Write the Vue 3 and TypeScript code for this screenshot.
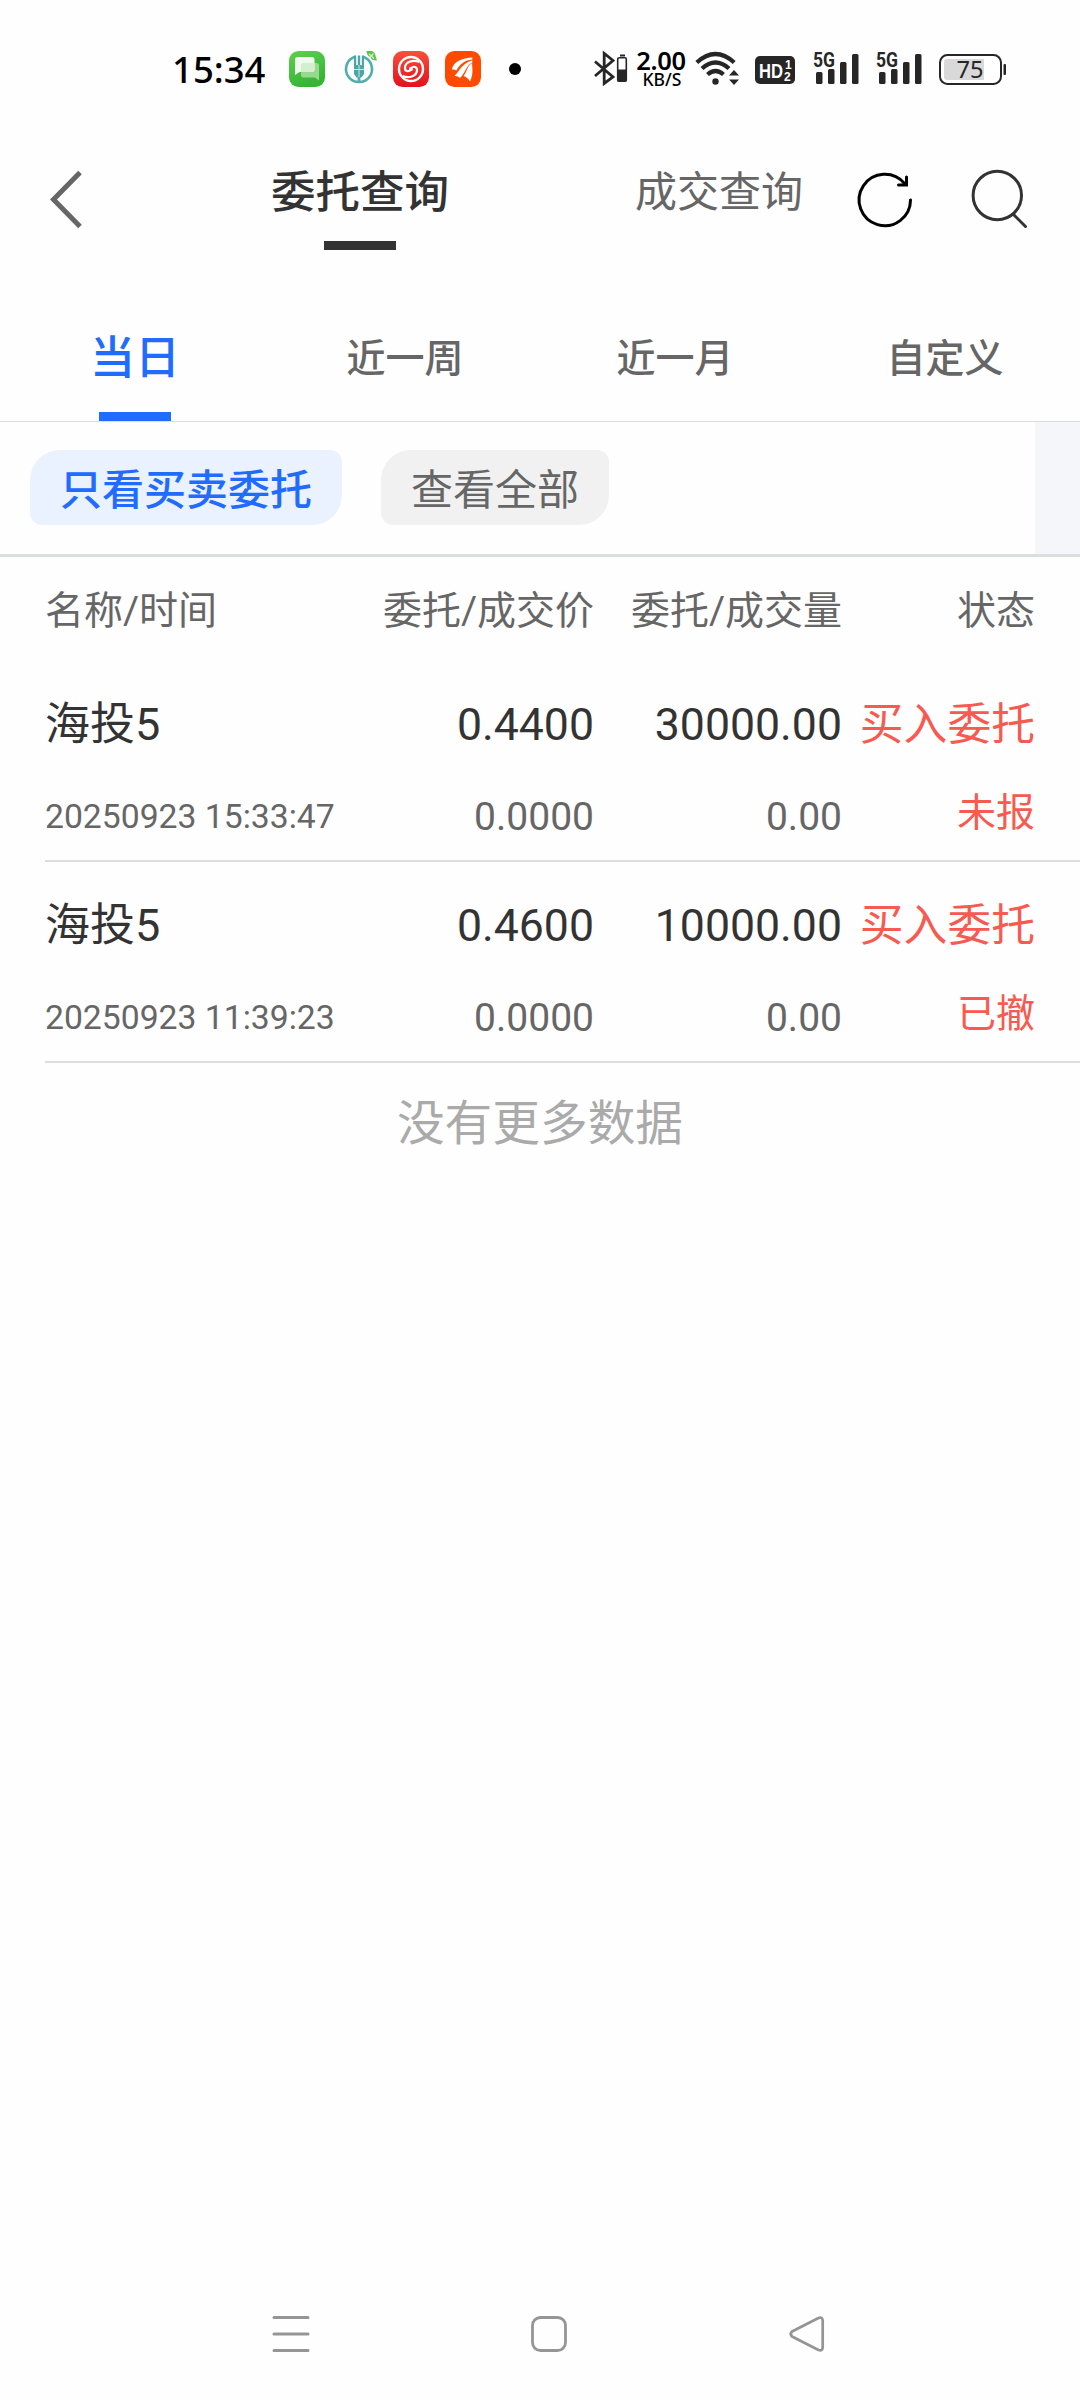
<script setup lang="ts">
interface Order {
  name: string
  time: string
  price: string
  dealPrice: string
  amount: string
  dealAmount: string
  side: string
  status: string
}

const ranges: string[] = ['当日', '近一周', '近一月', '自定义']
const activeRange = 0

const orders: Order[] = [
  {
    name: '海投5',
    time: '20250923 15:33:47',
    price: '0.4400',
    dealPrice: '0.0000',
    amount: '30000.00',
    dealAmount: '0.00',
    side: '买入委托',
    status: '未报',
  },
  {
    name: '海投5',
    time: '20250923 11:39:23',
    price: '0.4600',
    dealPrice: '0.0000',
    amount: '10000.00',
    dealAmount: '0.00',
    side: '买入委托',
    status: '已撤',
  },
]
</script>

<template>
  <div class="screen">
    <div class="status-bar">
      <div class="status-left">
        <span class="clock">15:34</span>
        <svg class="app-icon" viewBox="0 0 36 36">
          <defs>
            <linearGradient id="msg" x1="0" y1="0" x2="0.4" y2="1">
              <stop offset="0" stop-color="#5fd04f" />
              <stop offset="1" stop-color="#35b534" />
            </linearGradient>
          </defs>
          <rect width="36" height="36" rx="9.5" fill="url(#msg)" />
          <path d="M14 12h13.500a2.500 2.500 0 0 1 2.500 2.500V29.500l-4-3H14.500a2.500 2.500 0 0 1-2.500-2.500V14a2 2 0 0 1 2-2z" fill="#98d992" />
          <path d="M8.500 6h14.500a2.500 2.500 0 0 1 2.500 2.500v10a2.500 2.500 0 0 1-2.500 2.500H10.500l-4.500 3V8.500a2.500 2.500 0 0 1 2.500-2.500z" fill="#eefaec" />
          <path d="M12 21V14.500a2.500 2.500 0 0 1 2.500-2.500H25.500v6.500a2.500 2.500 0 0 1-2.500 2.500z" fill="#d3efcf" />
        </svg>
        <svg class="app-icon" viewBox="0 0 36 36">
          <g fill="none" stroke="#4fb0ab">
            <path d="M14 5.700A13 13 0 1 0 22 5.700" stroke-width="2.600" />
            <path d="M18 24v8" stroke-width="2.800" />
          </g>
          <path d="M13 4.500h2.200V14h1.600V4.500h2.400V14h1.600V4.500H23V23l-2.500 3.500h-5L13 23z" fill="#4fa5a6" />
          <path d="M18 14v12M13 18.500h10" stroke="#d7efee" stroke-width="0.900" />
          <path d="M25.500 0h5.500q3.500 1.500 3.500 5l1.500 4.500q-5.500 0-7-3.500-3.500-2-3.500-6z" fill="#5fc24a" />
          <path d="M28 3l5 4.500M32.500 2.500L29 6.500" stroke="#d8f2d0" stroke-width="1.200" />
        </svg>
        <svg class="app-icon" viewBox="0 0 36 36">
          <defs>
            <linearGradient id="swirl" x1="0" y1="0" x2="0" y2="1">
              <stop offset="0" stop-color="#f8503c" />
              <stop offset="1" stop-color="#e4101b" />
            </linearGradient>
          </defs>
          <rect width="36" height="36" rx="9.500" fill="url(#swirl)" />
          <g fill="none" stroke="#fff">
            <circle cx="18" cy="18" r="12" stroke-width="2.400" />
            <path d="M26.500 11C20 8.500 13 10.500 12 16C11.500 20.500 15.500 21.500 18 18.500" stroke-width="2.200" />
            <path d="M9.500 25C16 27.500 23 25.500 24 20C24.500 15.500 20.500 14.500 18 17.500" stroke-width="2.200" />
          </g>
          <rect x="16.300" y="16.300" width="3.400" height="3.400" fill="#fff" />
        </svg>
        <svg class="app-icon" viewBox="0 0 36 36">
          <rect width="36" height="36" rx="9.500" fill="#ff4a00" />
          <g fill="#fff">
            <path d="M6.800 18.500C8.500 10.500 17 7 27.500 6.500L27.300 8.500C19 9.500 14.500 13.500 11.500 19.500Q9.300 18 6.800 18.500z" />
            <path d="M9.500 25C14.500 20.500 16.500 12.500 27.300 9.300L27.300 11.500C21 14.500 20 22.500 15 27Q12.500 24.500 9.500 25z" />
            <path d="M18.500 25C22 21.500 21 16 27.200 12C26.800 17 29 22 25 30.500Q22.500 26 18.500 25z" />
          </g>
        </svg>
        <i class="more-dot"></i>
      </div>

      <div class="status-right">
        <svg width="36" height="36" viewBox="0 0 36 36">
          <path d="M2 10.500L20 26L11.200 32.500V2.500L20 9.500L2 25" fill="none" stroke="#262626" stroke-width="2.800" />
          <rect x="27" y="3.500" width="5" height="2" fill="#262626" />
          <rect x="24.700" y="6.700" width="8.600" height="23.500" rx="1.500" fill="#fff" stroke="#262626" stroke-width="1.600" />
          <rect x="24.500" y="18.500" width="9" height="12" fill="#262626" />
        </svg>
        <div class="speed">
          <span class="speed-value">2.00</span>
          <span class="speed-unit">KB/S</span>
        </div>
        <svg class="wifi" width="46" height="36" viewBox="0 0 46 36">
          <g fill="none" stroke="#262626" stroke-width="4.300">
            <path d="M1.800 11.500Q20.500-5.500 39.200 11.500" />
            <path d="M7 17.500Q20.500 5.500 34 17.500" />
            <path d="M12.500 23.500Q20.500 16.500 28.500 23.500" />
          </g>
          <circle cx="20.500" cy="30.500" r="3.200" fill="#262626" />
          <path d="M34 24.500l5-5.500 5 5.500zM34 28.500l5 5.500 5-5.500z" fill="#262626" />
        </svg>
        <svg class="hd" width="40" height="28" viewBox="0 0 40 28">
          <rect width="40" height="28" rx="5" fill="#262626" />
          <text x="4" y="21.500" class="hd-text" textLength="24" lengthAdjust="spacingAndGlyphs">HD</text>
          <text x="30" y="12.500" class="hd-num">1</text>
          <text x="29" y="24.500" class="hd-num">2</text>
        </svg>
        <svg v-for="n in 2" :key="n" class="signal" width="46" height="34" viewBox="0 0 46 34">
          <g fill="#262626">
            <rect x="3" y="20" width="6.500" height="12" rx="1.500" />
            <rect x="15" y="17" width="6.500" height="15" rx="1.500" />
            <rect x="27" y="10" width="6.500" height="22" rx="1.500" />
            <rect x="39" y="2" width="6.500" height="30" rx="1.500" />
          </g>
          <text x="0" y="14.500" class="net" textLength="22" lengthAdjust="spacingAndGlyphs">5G</text>
        </svg>
        <svg class="battery" width="68" height="32" viewBox="0 0 68 32">
          <rect x="1" y="1" width="61" height="29" rx="7.500" fill="#fff" stroke="#262626" stroke-width="2" />
          <path d="M8 5H45V26H8Q5 26 5 23V8Q5 5 8 5z" fill="#d9d9d9" />
          <rect x="64.500" y="10" width="2.500" height="11" rx="1" fill="#262626" />
          <text x="17.500" y="24" class="level" textLength="27" lengthAdjust="spacingAndGlyphs">75</text>
        </svg>
      </div>
    </div>

    <header class="nav">
      <svg class="back" width="40" height="60" viewBox="0 0 40 60">
        <path d="M33 2.500L6.500 29.500L33 56.500" fill="none" stroke="#666" stroke-width="5" />
      </svg>
      <div class="nav-tab active">
        <span>委托查询</span>
        <i></i>
      </div>
      <div class="nav-tab second"><span>成交查询</span></div>
      <svg class="refresh" width="56" height="56" viewBox="0 0 56 56">
        <g fill="none" stroke="#000" stroke-width="3" stroke-linecap="round">
          <path d="M53.500 28A25.700 25.700 0 1 1 47.500 11.500" />
          <path d="M49.500 5V13H41.500" />
        </g>
      </svg>
      <svg class="search" width="58" height="60" viewBox="0 0 58 60">
        <g fill="none" stroke="#333" stroke-width="3" stroke-linecap="round">
          <circle cx="26.300" cy="26.500" r="24.200" />
          <path d="M42.500 45.500L54.500 57.500" />
        </g>
      </svg>
    </header>

    <nav class="ranges">
      <div v-for="(r, i) in ranges" :key="r" class="range" :class="{ active: i === activeRange }">
        <span>{{ r }}</span>
        <i v-if="i === activeRange"></i>
      </div>
    </nav>

    <div class="filters">
      <div class="chips">
        <button class="chip active">只看买卖委托</button>
        <button class="chip">查看全部</button>
      </div>
      <div class="filter-edge"></div>
    </div>

    <main>
      <div class="grid head">
        <span>名称/时间</span>
        <span>委托/成交价</span>
        <span>委托/成交量</span>
        <span>状态</span>
      </div>
      <div v-for="o in orders" :key="o.time" class="order">
        <div class="grid primary">
          <span class="name">{{ o.name }}</span>
          <span>{{ o.price }}</span>
          <span>{{ o.amount }}</span>
          <span class="side">{{ o.side }}</span>
        </div>
        <div class="grid secondary">
          <span class="time">{{ o.time }}</span>
          <span>{{ o.dealPrice }}</span>
          <span>{{ o.dealAmount }}</span>
          <span class="state">{{ o.status }}</span>
        </div>
      </div>
      <p class="end">没有更多数据</p>
    </main>

    <footer class="system-nav">
      <svg width="36" height="36" viewBox="0 0 36 36">
        <path d="M1 1.500H35M1 18H35M1 34.500H35" stroke="#959595" stroke-width="3" stroke-linecap="round" />
      </svg>
      <svg width="36" height="36" viewBox="0 0 36 36">
        <rect x="1.500" y="1.500" width="33" height="33" rx="8" fill="none" stroke="#959595" stroke-width="2.800" />
      </svg>
      <svg width="36" height="36" viewBox="0 0 36 36">
        <path d="M29.500 2L3 15.500Q0.500 18 3 20.500L29.500 34Q33.500 35.500 33.700 31.500V4.500Q33.500 0.500 29.500 2z" fill="none" stroke="#959595" stroke-width="2.700" stroke-linejoin="round" />
      </svg>
    </footer>
  </div>
</template>

<style>
body {
  background: #fefefe;
}
</style>

<style scoped>
.screen {
  display: flex;
  flex-direction: column;
  width: 1080px;
  height: 2400px;
  overflow: hidden;
  background: #fefefe;
  color: #333;
  font-family: Roboto, "Noto Sans CJK SC", sans-serif;
}

svg {
  display: block;
  flex: none;
  overflow: visible;
}

i {
  display: block;
}

.status-bar {
  display: flex;
  justify-content: space-between;
  height: 122px;
  padding: 8px 73px 0 172px;
}

.status-left,
.status-right {
  display: flex;
  align-items: center;
  height: 122px;
}

.clock {
  width: 117px;
  font: 500 36.5px/50px "Noto Sans", sans-serif;
  color: #000;
}

.app-icon {
  width: 36px;
  height: 36px;
  margin-right: 16px;
}

.more-dot {
  width: 12px;
  height: 12px;
  margin-left: 12px;
  border-radius: 50%;
  background: #000;
}

.speed {
  display: flex;
  flex-direction: column;
  align-items: center;
  width: 54px;
  margin-left: 5px;
  color: #000;
  font-family: "Noto Sans", sans-serif;
}

.speed-value {
  font-size: 25.5px;
  font-weight: 600;
  line-height: 20px;
  letter-spacing: -0.3px;
}

.speed-unit {
  margin-left: 2px;
  font-size: 17.5px;
  font-weight: 500;
  line-height: 18px;
}

.wifi {
  margin-left: 7px;
}

.hd {
  margin: 2px 18px 0 14px;
}

.hd-text {
  font: 700 21px "Liberation Sans", sans-serif;
  fill: #fff;
}

.hd-num {
  font: 700 12px "Liberation Sans", sans-serif;
  fill: #fff;
}

.signal {
  margin-right: 17px;
}

.net {
  font: 700 20px Roboto, sans-serif;
  fill: #262626;
  stroke: #fefefe;
  stroke-width: 3px;
  paint-order: stroke;
}

.battery {
  margin-top: 1px;
}

.level {
  font: 400 23px "Noto Sans", sans-serif;
  fill: #262626;
}

.nav {
  display: flex;
  align-items: flex-start;
  height: 140px;
}

.back {
  margin: 40px 0 0 47px;
}

.nav-tab {
  display: flex;
  flex-direction: column;
  align-items: center;
  padding-top: 33px;
  font-size: 42px;
  line-height: 60px;
  color: #666;
}

.nav-tab.active {
  width: 180px;
  margin-left: 183px;
  font-size: 44.5px;
  font-weight: 500;
  color: #333;
}

.nav-tab i {
  width: 72px;
  height: 9px;
  margin-top: 18px;
  background: #333;
}

.nav-tab.second {
  width: 180px;
  margin-left: 179px;
}

.refresh {
  margin: 42px 0 0 48px;
}

.search {
  margin: 39px 0 0 58px;
}

.ranges {
  display: flex;
  height: 151px;
  border-bottom: 1px solid #dcdddd;
}

.range {
  display: flex;
  flex: 1;
  flex-direction: column;
  align-items: center;
  padding-top: 59px;
  font-size: 39px;
  font-weight: 500;
  line-height: 60px;
  color: #666;
}

.range.active {
  font-size: 45px;
  color: #216bff;
}

.range i {
  width: 72px;
  height: 9px;
  margin-top: 23px;
  background: #216bff;
}

.filters {
  display: flex;
  justify-content: space-between;
  height: 132px;
  border-bottom: 3px solid #dcdddd;
}

.chips {
  display: flex;
  gap: 39px;
  padding: 28px 0 0 30px;
}

.chip {
  height: 75px;
  padding: 7px 30px 0;
  border: 0;
  border-radius: 30px 12px 30px 12px;
  background: #f1f1f1;
  color: #666;
  font: 400 42px/68px Roboto, "Noto Sans CJK SC", sans-serif;
}

.chip.active {
  background: #ebf2ff;
  color: #216bff;
  font-weight: 500;
}

.filter-edge {
  width: 45px;
  background: #f4f6f9;
}

main {
  flex: 1;
}

.grid {
  display: grid;
  grid-template-columns: 300px 249px 248px 193px;
  align-items: center;
  text-align: right;
  white-space: nowrap;
}

.grid > :first-child {
  text-align: left;
}

.head {
  height: 46px;
  padding: 31px 45px 27px;
  font-size: 39px;
  line-height: 46px;
  color: #666;
}

.order {
  margin-left: 45px;
  padding: 34px 45px 18px 0;
  border-bottom: 2px solid #dcdddd;
}

.primary {
  font-size: 44.6px;
  line-height: 60px;
}

.name {
  font-size: 45px;
}

.secondary {
  margin-top: 37px;
  font-size: 39px;
  line-height: 50px;
  color: #666;
}

.time {
  font-size: 33.7px;
}

.side {
  font-size: 43.8px;
  color: #f65a50;
}

.state {
  margin: -4px 0 4px;
  color: #f65a50;
}

.secondary {
  height: 50px;
}

.end {
  margin: 31px 0 0;
  font-size: 47.7px;
  line-height: 60px;
  text-align: center;
  color: #aaa;
}

.system-nav {
  display: flex;
  gap: 222px;
  align-items: center;
  height: 132px;
  padding-left: 273px;
}
</style>
